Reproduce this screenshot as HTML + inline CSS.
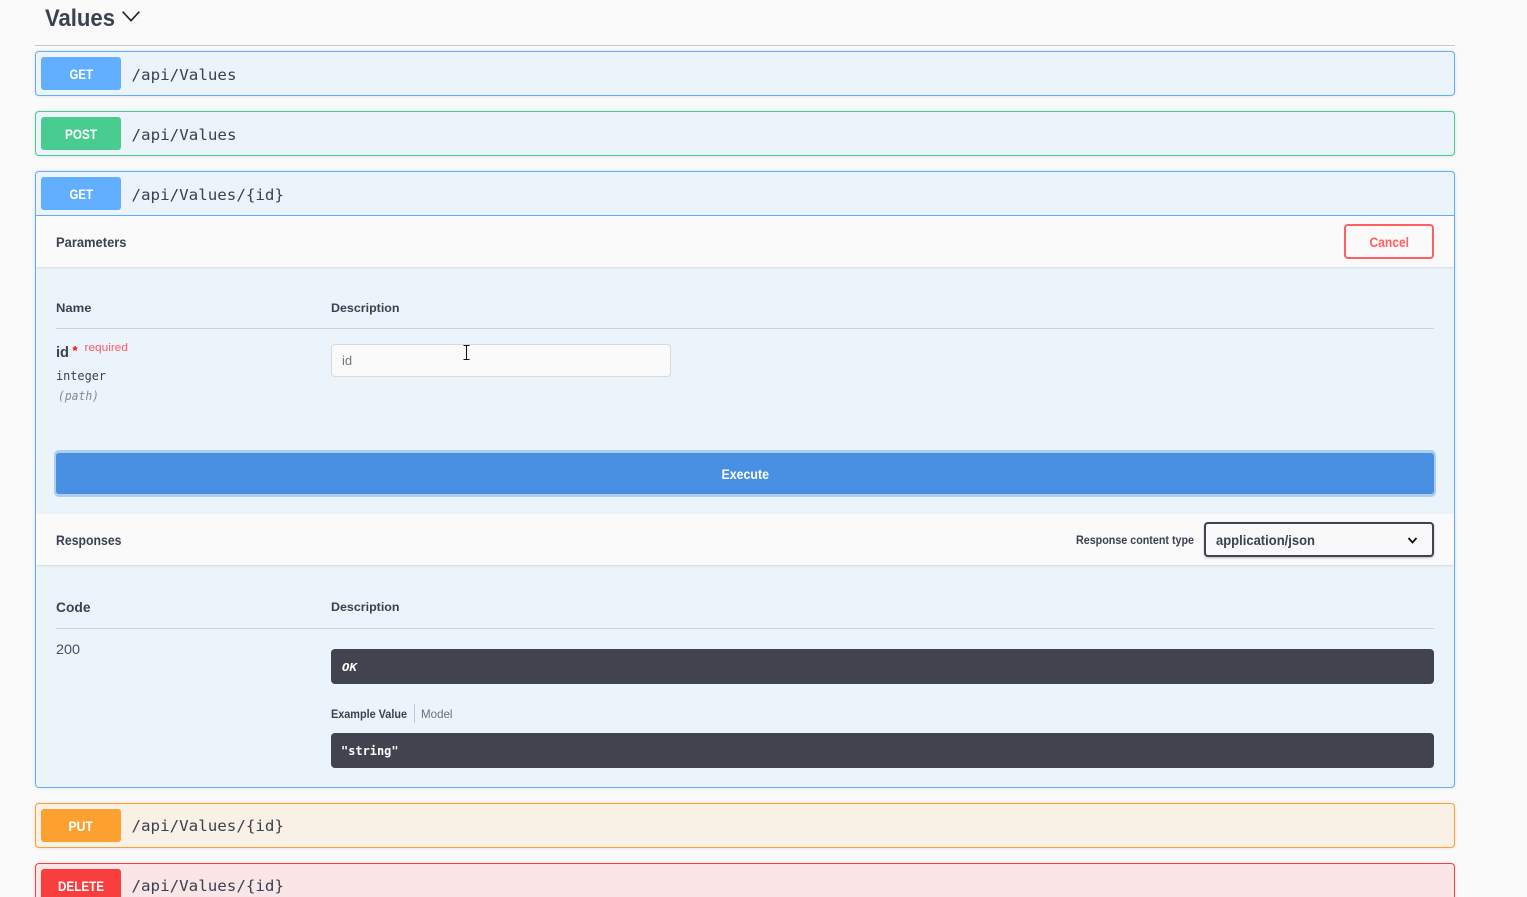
<!DOCTYPE html>
<html lang="en"><head><meta charset="utf-8"><title>Values</title>
<style>
html,body{margin:0;padding:0;width:1527px;height:897px;overflow:hidden;background:#fafafa}
#p{position:relative;width:1527px;height:897px;overflow:hidden;background:#fafafa}
.a{position:absolute;box-sizing:border-box}
.op{left:35px;width:1420px;border:1px solid #61affe;border-radius:4px;background:#ebf3fb;box-shadow:0 0 3px rgba(0,0,0,.12)}
.b{left:41px;width:80px;height:33px;border-radius:3px}
.strip{left:36px;width:1418px;height:51px;background:#fafafa;box-shadow:0 1px 2px rgba(0,0,0,.1)}
svg{position:absolute;left:0;top:0}
text{font-family:"Liberation Sans",sans-serif;fill:#3b4151}
.m{font-family:"DejaVu Sans Mono",monospace;font-size:15.5px}
.w{fill:#fff;font-weight:700;font-size:14px}
.h{font-weight:700;font-size:12px}
</style></head><body><div id="p">
<div class="a" style="left:35px;top:45px;width:1420px;height:1px;background:#c6c6c8"></div>
<div class="a op" style="top:51px;height:45px"></div>
<div class="a b" style="top:57px;background:#61affe"></div>
<div class="a op" style="top:111px;height:45px;border-color:#49cc90"></div>
<div class="a b" style="top:117px;background:#49cc90"></div>
<div class="a op" style="top:171px;height:617px"></div>
<div class="a b" style="top:177px;background:#61affe"></div>
<div class="a" style="left:36px;top:215px;width:1418px;height:1px;background:#61affe"></div>
<div class="a strip" style="top:216px"></div>
<div class="a" style="left:1344px;top:224px;width:90px;height:35px;border:2px solid #ff6060;border-radius:4px"></div>
<div class="a" style="left:56px;top:328px;width:1378px;height:1px;background:#cdd3de"></div>
<div class="a" style="left:331px;top:344px;width:340px;height:33px;background:#fafafa;border:1px solid #d9d9d9;border-radius:4px"></div>
<div class="a" style="left:54px;top:450px;width:1382px;height:47px;background:#aecef0;border-radius:5px"></div>
<div class="a" style="left:56px;top:453px;width:1378px;height:41px;background:#4990e2;border-radius:3px"></div>
<div class="a strip" style="top:514px"></div>
<div class="a" style="left:1204px;top:522px;width:230px;height:35px;border:2px solid #41444e;border-radius:4px;background:#f9f9f9;box-shadow:0 1px 2px rgba(0,0,0,.25)"></div>
<div class="a" style="left:56px;top:628px;width:1378px;height:1px;background:#cdd3de"></div>
<div class="a" style="left:331px;top:649px;width:1103px;height:35px;background:#41444e;border-radius:4px"></div>
<div class="a" style="left:414px;top:704px;width:1px;height:19px;background:#c3c7cf"></div>
<div class="a" style="left:331px;top:733px;width:1103px;height:35px;background:#41444e;border-radius:4px"></div>
<div class="a op" style="top:803px;height:45px;border-color:#fca130;background:#f9f0e6"></div>
<div class="a b" style="top:809px;background:#fca130"></div>
<div class="a op" style="top:863px;height:45px;border-color:#f93e3e;background:#fae6e7"></div>
<div class="a b" style="top:869px;background:#f93e3e"></div>
<svg width="1527" height="897" viewBox="0 0 1527 897" xmlns="http://www.w3.org/2000/svg">
<text x="45" y="26" font-size="24" font-weight="700" textLength="70" lengthAdjust="spacingAndGlyphs">Values</text>
<path d="M122.7 11.7L131 20.7L139.3 11.7" fill="none" stroke="#222" stroke-width="1.6"/>
<text class="w" x="69.5" y="79" textLength="23.5" lengthAdjust="spacingAndGlyphs">GET</text>
<text class="m" x="131.5" y="80" textLength="105" lengthAdjust="spacingAndGlyphs">/api/Values</text>
<text class="w" x="65" y="139" textLength="32" lengthAdjust="spacingAndGlyphs">POST</text>
<text class="m" x="131.5" y="140" textLength="105" lengthAdjust="spacingAndGlyphs">/api/Values</text>
<text class="w" x="69.5" y="199" textLength="23.5" lengthAdjust="spacingAndGlyphs">GET</text>
<text class="m" x="131.5" y="200" textLength="152.5" lengthAdjust="spacingAndGlyphs">/api/Values/{id}</text>
<text x="56" y="247" font-size="14" font-weight="700" textLength="70.5" lengthAdjust="spacingAndGlyphs" style="font-size:13.5px">Parameters</text>
<text x="1369.5" y="247" font-size="14" font-weight="700" style="fill:#ff6060" textLength="39.5" lengthAdjust="spacingAndGlyphs">Cancel</text>
<text class="h" x="56" y="312" textLength="35.5" lengthAdjust="spacingAndGlyphs">Name</text>
<text class="h" x="331" y="312" textLength="68.5" lengthAdjust="spacingAndGlyphs">Description</text>
<text x="56" y="357" font-size="15" font-weight="700" textLength="13" lengthAdjust="spacingAndGlyphs">id</text>
<text x="72.5" y="355" font-size="13" font-weight="700" style="fill:#f00">*</text>
<text x="84.5" y="351" font-size="11" style="fill:#ff5a64" textLength="43.5" lengthAdjust="spacingAndGlyphs">required</text>
<text x="56" y="380" font-size="12" style="font-family:'DejaVu Sans Mono',monospace" textLength="50" lengthAdjust="spacingAndGlyphs">integer</text>
<text x="58" y="400" font-size="12" style="font-family:'DejaVu Sans Mono',monospace;font-style:italic;fill:#858a94" textLength="41" lengthAdjust="spacingAndGlyphs">(path)</text>
<text x="342" y="365" font-size="13" style="fill:#77777c">id</text>
<path d="M463.5 345.5H469.5M466.5 345.5V359.5M463.5 359.5H469.5" fill="none" stroke="#111" stroke-width="1"/>
<text class="w" x="721.5" y="479" textLength="47.5" lengthAdjust="spacingAndGlyphs">Execute</text>
<text x="56" y="545" font-size="14" font-weight="700" textLength="65.5" lengthAdjust="spacingAndGlyphs">Responses</text>
<text class="h" x="1076" y="544" textLength="118" lengthAdjust="spacingAndGlyphs">Response content type</text>
<text x="1216" y="545" font-size="14" font-weight="700" textLength="99" lengthAdjust="spacingAndGlyphs">application/json</text>
<path d="M1408.5 538L1412.5 542.5L1416.5 538" fill="none" stroke="#111" stroke-width="1.8"/>
<text x="56" y="612" font-size="14" font-weight="700" textLength="34.5" lengthAdjust="spacingAndGlyphs">Code</text>
<text class="h" x="331" y="611" textLength="68.5" lengthAdjust="spacingAndGlyphs">Description</text>
<text x="56" y="654" font-size="14" style="fill:#4a4f5c" textLength="24" lengthAdjust="spacingAndGlyphs">200</text>
<text x="342" y="671" font-size="11" font-weight="700" font-style="italic" style="fill:#fff;font-family:'DejaVu Sans Mono',monospace" textLength="15" lengthAdjust="spacingAndGlyphs">OK</text>
<text class="h" x="331" y="718" textLength="76" lengthAdjust="spacingAndGlyphs">Example Value</text>
<text x="421" y="718" font-size="12" style="fill:#6b707c" textLength="31.5" lengthAdjust="spacingAndGlyphs">Model</text>
<text x="341" y="755" font-size="12" font-weight="700" style="font-family:'DejaVu Sans Mono',monospace;fill:#fff" textLength="57.5" lengthAdjust="spacingAndGlyphs">"string"</text>
<text class="w" x="68.5" y="831" textLength="24.5" lengthAdjust="spacingAndGlyphs">PUT</text>
<text class="m" x="131.5" y="831" textLength="152.5" lengthAdjust="spacingAndGlyphs">/api/Values/{id}</text>
<text class="w" x="58" y="891" textLength="46" lengthAdjust="spacingAndGlyphs">DELETE</text>
<text class="m" x="131.5" y="891" textLength="152.5" lengthAdjust="spacingAndGlyphs">/api/Values/{id}</text>
</svg>
</div></body></html>
